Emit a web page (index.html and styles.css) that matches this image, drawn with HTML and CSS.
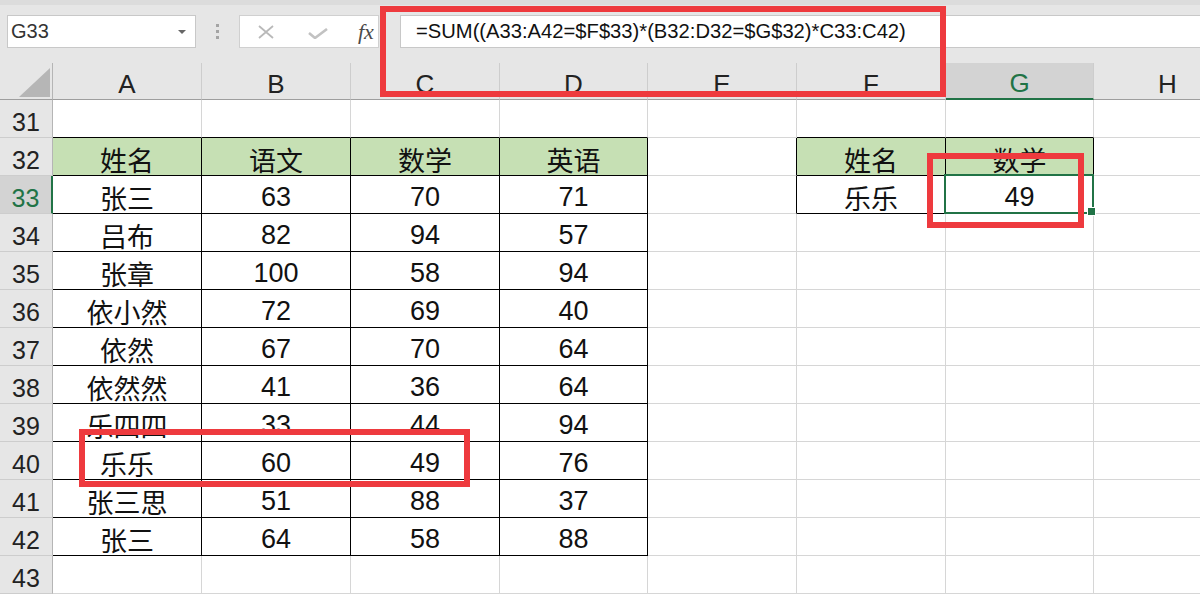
FILE: index.html
```html
<!DOCTYPE html>
<html lang="zh">
<head>
<meta charset="utf-8">
<title>Excel</title>
<link rel="stylesheet" href="styles.css">
</head>
<body>
<div class="app">
  <div class="toolbar">
    <div class="namebox"><span>G33</span><span class="dd"></span></div>
    <div class="dots"><i></i><i></i><i></i></div>
    <div class="btns">
      <svg class="ic-x" width="16" height="14" viewBox="0 0 16 14"><path d="M1 1 L15 13 M15 1 L1 13" stroke="#b9b9b9" stroke-width="1.8" fill="none"/></svg>
      <svg class="ic-ok" width="20" height="11" viewBox="0 0 20 11"><path d="M1 5 L7 10 L19 1" stroke="#c2c2c2" stroke-width="2.6" fill="none"/></svg>
      <span class="fx">fx</span>
    </div>
    <div class="fbox">=SUM((A33:A42=$F$33)*(B32:D32=$G$32)*C33:C42)</div>
  </div>
  <div class="sheet">
    <div class="ch corner"><svg width="31" height="29" viewBox="0 0 31 29"><polygon points="31,0 31,29 0,29" fill="#b6b6b6"/></svg></div>
    <div class="ch">A</div><div class="ch">B</div><div class="ch">C</div><div class="ch">D</div><div class="ch">E</div><div class="ch">F</div><div class="ch sel">G</div><div class="ch">H</div>

    <div class="rh">31</div>
    <div class="c kb"></div><div class="c kb"></div><div class="c kb"></div><div class="c kb"></div><div class="c"></div><div class="c kb"></div><div class="c kb"></div><div class="c"></div>

    <div class="rh">32</div>
    <div class="c k g">姓名</div><div class="c k g">语文</div><div class="c k g">数学</div><div class="c k g">英语</div><div class="c kr"></div><div class="c k g">姓名</div><div class="c k g">数学</div><div class="c"></div>

    <div class="rh sel">33</div>
    <div class="c k">张三</div><div class="c k">63</div><div class="c k">70</div><div class="c k">71</div><div class="c kr"></div><div class="c k">乐乐</div><div class="c k cur">49</div><div class="c"></div>

    <div class="rh">34</div>
    <div class="c k">吕布</div><div class="c k">82</div><div class="c k">94</div><div class="c k">57</div><div class="c"></div><div class="c"></div><div class="c"></div><div class="c"></div>

    <div class="rh">35</div>
    <div class="c k">张章</div><div class="c k">100</div><div class="c k">58</div><div class="c k">94</div><div class="c"></div><div class="c"></div><div class="c"></div><div class="c"></div>

    <div class="rh">36</div>
    <div class="c k">依小然</div><div class="c k">72</div><div class="c k">69</div><div class="c k">40</div><div class="c"></div><div class="c"></div><div class="c"></div><div class="c"></div>

    <div class="rh">37</div>
    <div class="c k">依然</div><div class="c k">67</div><div class="c k">70</div><div class="c k">64</div><div class="c"></div><div class="c"></div><div class="c"></div><div class="c"></div>

    <div class="rh">38</div>
    <div class="c k">依然然</div><div class="c k">41</div><div class="c k">36</div><div class="c k">64</div><div class="c"></div><div class="c"></div><div class="c"></div><div class="c"></div>

    <div class="rh">39</div>
    <div class="c k">乐四四</div><div class="c k">33</div><div class="c k">44</div><div class="c k">94</div><div class="c"></div><div class="c"></div><div class="c"></div><div class="c"></div>

    <div class="rh">40</div>
    <div class="c k">乐乐</div><div class="c k">60</div><div class="c k">49</div><div class="c k">76</div><div class="c"></div><div class="c"></div><div class="c"></div><div class="c"></div>

    <div class="rh">41</div>
    <div class="c k">张三思</div><div class="c k">51</div><div class="c k">88</div><div class="c k">37</div><div class="c"></div><div class="c"></div><div class="c"></div><div class="c"></div>

    <div class="rh">42</div>
    <div class="c k">张三</div><div class="c k">64</div><div class="c k">58</div><div class="c k">88</div><div class="c"></div><div class="c"></div><div class="c"></div><div class="c"></div>

    <div class="rh">43</div>
    <div class="c"></div><div class="c"></div><div class="c"></div><div class="c"></div><div class="c"></div><div class="c"></div><div class="c"></div><div class="c"></div>
  </div>
  <div class="rb rb1"></div>
  <div class="rb rb2"></div>
  <div class="rb rb3"></div>
</div>
</body>
</html>
```
FILE: styles.css
```css
* { box-sizing: border-box; }
html, body { margin: 0; padding: 0; }
body {
  width: 1200px;
  height: 595px;
  overflow: hidden;
  background: #fff;
  font-family: "Liberation Sans", "Noto Sans CJK SC", sans-serif;
}
.app { position: relative; width: 1200px; height: 595px; overflow: hidden; }

.toolbar {
  height: 63px;
  background: #e6e6e6;
  border-top: 5px solid #dcdcdc;
  display: flex;
  align-items: flex-start;
  padding: 10px 0 0 7px;
}
.namebox {
  width: 189px;
  height: 33px;
  background: #fff;
  border: 1px solid #c8c8c8;
  display: flex;
  align-items: center;
  padding-left: 3px;
  font-size: 20px;
  color: #333;
}
.dd {
  margin-left: auto;
  margin-right: 9px;
  width: 0;
  height: 0;
  border-left: 4px solid transparent;
  border-right: 4px solid transparent;
  border-top: 4px solid #666;
}
.dots {
  width: 43px;
  height: 33px;
  display: flex;
  flex-direction: column;
  align-items: center;
  justify-content: center;
  gap: 3px;
}
.dots i { display: block; width: 3px; height: 3px; background: #a4a4a4; }
.btns {
  width: 140px;
  height: 33px;
  background: #fff;
  border: 1px solid #d0d0d0;
  display: flex;
  align-items: center;
}
.ic-x { margin-left: 18px; }
.ic-ok { margin-left: 34px; margin-top: 4px; }
.fx {
  margin-left: 30px;
  font-family: "Liberation Serif", serif;
  font-style: italic;
  font-size: 22px;
  color: #4a4a4a;
}
.fbox {
  margin-left: 21px;
  flex: 1;
  height: 33px;
  background: #fff;
  border: 1px solid #c8c8c8;
  border-right: none;
  display: flex;
  align-items: center;
  padding-left: 15px;
  font-size: 20.2px;
  color: #111;
  white-space: nowrap;
}

.sheet {
  width: 1242px;
  display: grid;
  grid-template-columns: 53px 149px 149px 149px 148px 149px 149px 148px 148px;
  grid-template-rows: 37px repeat(13, 38px);
}
.ch {
  background: #e6e6e6;
  border-right: 1px solid #cdcdcd;
  border-bottom: 1px solid #9e9e9e;
  font-size: 26px;
  color: #222;
  display: flex;
  justify-content: center;
  align-items: center;
  padding-top: 6px;
}
.ch.corner {
  justify-content: flex-end;
  align-items: flex-end;
  padding: 0 2px 2px 0;
  border-right-color: #b5b5b5;
}
.ch.sel {
  background: #d3d3d3;
  color: #217346;
  border-bottom: 2px solid #217346;
}
.rh {
  background: #e6e6e6;
  border-right: 1px solid #b5b5b5;
  border-bottom: 1px solid #cdcdcd;
  font-size: 25px;
  color: #222;
  display: flex;
  justify-content: center;
  align-items: center;
  padding-top: 7px;
}
.rh.sel {
  background: #d3d3d3;
  color: #217346;
  border-right: 2px solid #217346;
}
.c {
  border-right: 1px solid #d6d6d6;
  border-bottom: 1px solid #d6d6d6;
  font-size: 27px;
  color: #111;
  display: flex;
  justify-content: center;
  align-items: center;
  padding-top: 5px;
  white-space: nowrap;
  overflow: hidden;
}
.kb { border-bottom-color: #000; }
.kr { border-right-color: #000; }
.k { border-right-color: #000; border-bottom-color: #000; }
.g { background: #c6e0b4; }
.cur { position: relative; overflow: visible; }
.cur::before {
  content: "";
  position: absolute;
  left: -2px;
  top: -2px;
  right: -1px;
  bottom: -1px;
  border: 2px solid #217346;
}
.cur::after {
  content: "";
  position: absolute;
  right: -3px;
  bottom: -3px;
  width: 7px;
  height: 7px;
  background: #217346;
  border: 1px solid #fff;
}

.rb {
  position: absolute;
  border: 6px solid #ee3a3e;
  pointer-events: none;
}
.rb1 { left: 380px; top: 6px; width: 566px; height: 91px; }
.rb2 { left: 927px; top: 153px; width: 157px; height: 75px; }
.rb3 { left: 79px; top: 429px; width: 391px; height: 58px; }
```
